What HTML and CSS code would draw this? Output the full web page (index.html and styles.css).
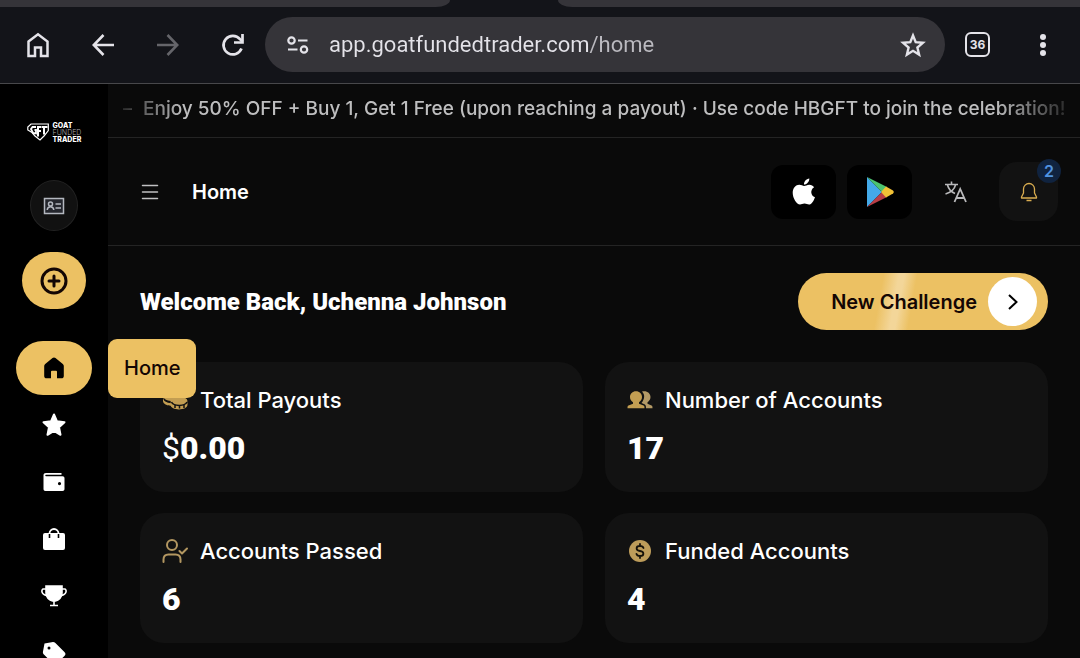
FILE: index.html
```html
<!DOCTYPE html>
<html lang="en">
<head>
    <meta charset="UTF-8">
    <meta name="viewport" content="width=device-width, initial-scale=1.0">
    <title>Home | Goat Funded Trader</title>
    <link rel="stylesheet" href="styles.css">
</head>
<body>
    <!-- browser bar -->
    <div class="browser">
        <div class="tabs">
            <div class="tab tabLeft"></div>
            <div class="tab tabRight"></div>
        </div>
        <div class="toolbar">
            <button class="toolButton" aria-label="Home page">
                <svg width="24" height="26" viewBox="0 0 24 26" fill="none" stroke="currentColor" stroke-width="2.500"><path d="M2.500 9.500 12 2.300l9.500 7.200V24H15v-8.500H9V24H2.500z"/></svg>
            </button>
            <button class="toolButton" aria-label="Back">
                <svg width="22" height="22" viewBox="0 0 22 22" fill="none" stroke="currentColor" stroke-width="2.600"><path d="M22 11H2M11.500 1 1.800 11l9.700 10"/></svg>
            </button>
            <button class="toolButton disabled" aria-label="Forward" disabled>
                <svg width="22" height="22" viewBox="0 0 22 22" fill="none" stroke="currentColor" stroke-width="2.600"><path d="M0 11h20M10.500 1l9.700 10-9.700 10"/></svg>
            </button>
            <button class="toolButton" aria-label="Reload">
                <svg width="24" height="24" viewBox="0 0 24 24" fill="none" stroke="currentColor" stroke-width="2.700"><path d="M20.500 15.500A9.300 9.300 0 1 1 19 6.200l2.500 2.500"/><path d="M21.500 1v8.500H13"/></svg>
            </button>
            <div class="addressBar">
                <svg width="22" height="18" viewBox="0 0 22 18" fill="none" stroke="currentColor" stroke-width="2.200"><circle cx="4.500" cy="4.500" r="3.200"/><path d="M11 4.500h9.500M1 13.500h9.500"/><circle cx="17" cy="13.500" r="3.200"/></svg>
                <input class="url" type="text" aria-label="Address" value="app.goatfundedtrader.com/home">
                <button class="bookmark" aria-label="Bookmark">
                    <svg width="26" height="26" viewBox="0 0 26 26" fill="none" stroke="currentColor" stroke-width="2.400"><path d="m13 3.500 2.700 6.700 7.200.6-5.500 4.700 1.700 7.100L13 18.800l-6.100 3.800 1.700-7.100-5.500-4.700 7.200-.6z"/></svg>
                </button>
            </div>
            <button class="toolButton" aria-label="Open tabs"><span class="tabCount">36</span></button>
            <button class="toolButton" aria-label="Menu">
                <svg width="6" height="22" viewBox="0 0 6 22" fill="currentColor"><circle cx="3" cy="3" r="3"/><circle cx="3" cy="11" r="3"/><circle cx="3" cy="19" r="3"/></svg>
            </button>
        </div>
    </div>

    <div class="app">
        <aside class="sidebar">
            <a class="logo" href="#">
                <svg width="22" height="18" viewBox="0 0 22 18" fill="none" stroke="#fff" stroke-width="1.200"><path d="M4 1h17.300v6.500L17 13l-4 4-5-4-3-3.500L.800 7V4z"/><path d="M9 4H5.500L4 6l2 4 3 .5V7H7.500" stroke-width="1.800"/><path d="M14.500 4H11v9.500M11 8h3" stroke-width="2"/><path d="M15 4h5.500M17 4v7.500" stroke-width="2"/></svg>
                <span class="logoText"><b>GOAT</b><span>FUNDED</span><b>TRADER</b></span>
            </a>
            <button class="profile" aria-label="Profile">
                <svg width="22" height="18" viewBox="0 0 22 18" fill="#24262d" stroke="#b4b8c0" stroke-width="1.500"><path d="M1.500 1.500h19v15h-19z"/><circle cx="7.500" cy="7" r="2" fill="none"/><path d="M4.200 13c.4-4.500 6.200-4.500 6.600 0M12.500 7H18M12.500 11H18" fill="none"/></svg>
            </button>
            <button class="addButton" aria-label="Add">
                <svg width="28" height="28" viewBox="0 0 28 28" fill="none" stroke="currentColor" stroke-width="3" stroke-linecap="round"><circle cx="14" cy="14" r="12"/><path d="M14 9v10M9 14h10"/></svg>
            </button>
            <nav class="menu">
                <a class="menuItem active" href="#" aria-label="Home">
                    <svg width="22" height="22" viewBox="0 0 22 22" fill="currentColor"><path d="M11 .5c.6 0 1 .2 1.500.6l7.300 6c.7.6 1 1.200 1 2V19c0 1.400-.9 2.300-2.300 2.300H14v-6.500a1 1 0 0 0-1-1H9a1 1 0 0 0-1 1v6.500H3.500C2.100 21.300 1.200 20.400 1.200 19V9.100c0-.8.3-1.400 1-2l7.300-6c.5-.4.900-.6 1.500-.6z"/></svg>
                    <span class="tooltip">Home</span>
                </a>
                <a class="menuItem" href="#" aria-label="Favourites">
                    <svg width="26" height="26" viewBox="0 0 26 26" fill="currentColor" stroke="currentColor" stroke-width="2" stroke-linejoin="round"><path d="m13 2.500 3 6.800 7.500.9-5.500 5.100 1.500 7.500L13 19l-6.500 3.800L8 15.300l-5.500-5.100 7.500-.9z"/></svg>
                </a>
                <a class="menuItem" href="#" aria-label="Wallet">
                    <svg width="22" height="20" viewBox="0 0 22 20" fill="currentColor"><path d="M3 1h15.500v1.800H3a.7.7 0 0 0 0 1.500h16.500c1.300 0 2 .7 2 2V17c0 1.300-.7 2-2 2H2.500c-1.300 0-2-.7-2-2V3.200C.5 1.800 1.500 1 3 1zm13.500 9a1.600 1.600 0 1 0 0 3.200 1.600 1.600 0 0 0 0-3.200z"/></svg>
                </a>
                <a class="menuItem" href="#" aria-label="Shop">
                    <svg width="24" height="22" viewBox="0 0 24 22"><path d="M7.500 8V5.500a4.500 4.500 0 0 1 9 0V8" fill="none" stroke="#fff" stroke-width="1.800"/><rect x="1" y="5" width="22" height="17" rx="2" fill="#fff"/><path d="M7.500 6v4M16.500 6v4" stroke="#000" stroke-width="1.600"/></svg>
                </a>
                <a class="menuItem" href="#" aria-label="Competitions">
                    <svg width="26" height="22" viewBox="0 0 26 22" fill="none" stroke="currentColor" stroke-width="1.600"><path d="M5 1h16v7c0 4.500-3.500 7.500-6.500 8h-3C8.500 15.500 5 12.500 5 8z" fill="currentColor"/><path d="M5.500 4H2.300C.3 4-.5 10 6.500 10.500M20.500 4h3.200c2 0 2.800 6-4.200 6.500M13 16v4M9 20.500h8"/></svg>
                </a>
                <a class="menuItem" href="#" aria-label="Offers">
                    <svg width="26" height="26" viewBox="0 0 26 26"><path d="M3.500 3.500 12 2c1 0 1.700.3 2.400 1l9 9c1.400 1.300 1.400 2.700 0 4l-7.500 7.500c-1.300 1.300-2.700 1.300-4 0l-9-9c-.8-.8-1-1.500-1-2.500z" fill="#fff"/><circle cx="8" cy="8" r="1.500" fill="#000"/></svg>
                </a>
            </nav>
        </aside>

        <main class="main">
            <div class="promo">
                <p><span class="promoDash">–</span>Enjoy 50% OFF + Buy 1, Get 1 Free (upon reaching a payout) · Use code HBGFT to join the celebration!</p>
            </div>
            <header class="header">
                <button class="menuToggle" aria-label="Toggle menu">
                    <svg width="18" height="16" viewBox="0 0 18 16" stroke="currentColor" stroke-width="1.500" stroke-linecap="round"><path d="M1.500 1.500h15M1.500 8h15M1.500 14.500h15"/></svg>
                </button>
                <h2 class="pageName">Home</h2>
                <div class="actions">
                    <a class="store" href="#" aria-label="App Store">
                        <svg width="24" height="28" viewBox="0 0 24 28" fill="#fff"><path d="M17.300.500c.2 2.800-2.400 6.100-5.300 6.100-.4-2.800 2.400-5.900 5.300-6.100z"/><path d="M12.100 8c1.400 0 2.900-1.300 5.300-1.300 1.900 0 3.700 1 4.700 2.500-4.200 2.600-3.500 8.400.9 10-1.300 3.600-3.500 7.300-6 7.300-1.700 0-2.400-1-4.500-1s-2.900 1-4.500 1C4.700 26.500.7 20.300.7 14.800c0-5 3.200-8 6.500-8 2.100 0 3.700 1.200 4.900 1.200z"/></svg>
                    </a>
                    <a class="store" href="#" aria-label="Google Play">
                        <svg width="28" height="32" viewBox="0 0 28 32"><path d="M1 1v30l15-15z" fill="#44a9e8"/><path d="M1 1l20 10-5 5z" fill="#4cc470"/><path d="M1 31l20-10-5-5z" fill="#b93d46"/><path d="M20 10.500l7 4q1.500 1.500 0 3l-7 4-5-5.500z" fill="#f2c136"/></svg>
                    </a>
                    <button class="language" aria-label="Language">
                        <svg width="24" height="22" viewBox="0 0 24 22" fill="none" stroke="#b9b9bb" stroke-width="1.600"><path d="M1 3.500h13M7.500.5v3M3.500 4c1 4 4 7 7.500 8.500M11.500 4C10.500 8 6.500 11.500 1.500 13"/><path d="M10.500 21l5.700-13 5.800 13M12.500 17h7.500" stroke-width="1.800"/></svg>
                    </button>
                    <button class="bell" aria-label="Notifications">
                        <svg width="18" height="20" viewBox="0 0 18 20" fill="none" stroke="#d9ad50" stroke-width="1.300" stroke-linejoin="round"><path d="M3.500 11V7a5.500 5.500 0 0 1 11 0v4l2 4v1h-15v-1zM6.500 18.500h5"/></svg>
                        <span class="badge">2</span>
                    </button>
                </div>
            </header>

            <section class="content">
                <div class="welcome">
                    <h1>Welcome Back, Uchenna Johnson</h1>
                    <a class="challenge" href="#">
                        <span>New Challenge</span>
                        <span class="arrow">
                            <svg width="12" height="18" viewBox="0 0 12 18" fill="none" stroke="currentColor" stroke-width="2"><path d="M2 2l7.500 7L2 16"/></svg>
                        </span>
                    </a>
                </div>
                <div class="cards">
                    <div class="card">
                        <h3>
                            <svg width="26" height="26" viewBox="0 0 26 26" fill="#c39e52"><ellipse cx="9" cy="9" rx="8" ry="5"/><path d="M1 11v3c0 5 11 6 12 3-6-1-10-2-12-6z"/><ellipse cx="17" cy="14" rx="8.500" ry="4.500"/><path d="M8.500 15v2.500c0 6.500 17 6.500 17 0V15c-2 4-15 4-17 0z"/><path d="M9.500 15c2 4.500 13.500 4.500 15.500 0M13 18v3M17.500 18.500v3M22 18v3M2 12c1 2 3 3 6 3" fill="none" stroke="#121212" stroke-width="1.500"/></svg>
                            Total Payouts
                        </h3>
                        <p class="value"><span>$</span>0.00</p>
                    </div>
                    <div class="card">
                        <h3>
                            <svg width="26" height="26" viewBox="0 0 26 26" fill="#c39e52"><path d="M9 4.200c3.500 0 6 2.500 6 5.800 0 2.300-1.200 4.200-3 5.200v1.500l4.500 1.800c.8.400 1 .8 1 2.700H.5c0-1.900.2-2.300 1-2.700L6 16.700v-1.500c-1.800-1-3-2.900-3-5.200 0-3.300 2.500-5.800 6-5.800z"/><path d="M15 4.600c4-1.500 8.500 1 8.500 5.400 0 2.300-1.300 4.200-3 5.200v1.500l4 1.800c.8.400 1 .8 1 2.700H19c0-2.500-.4-3.300-1.600-3.900L14.500 16c3.500-4 3.500-8.500.5-11.400z" fill="#b49a66"/></svg>
                            Number of Accounts
                        </h3>
                        <p class="value">17</p>
                    </div>
                    <div class="card">
                        <h3>
                            <svg width="26" height="26" viewBox="0 0 26 26" fill="none" stroke="#b39761" stroke-width="2" stroke-linecap="round" stroke-linejoin="round"><circle cx="10" cy="7" r="5"/><path d="M1.500 24v-2.500c0-3 2-5 5-5h7c3 0 5 2 5 5V24M17.500 13l2.500 2.500L25 10.500"/></svg>
                            Accounts Passed
                        </h3>
                        <p class="value">6</p>
                    </div>
                    <div class="card">
                        <h3>
                            <svg width="26" height="26" viewBox="0 0 26 26"><circle cx="13" cy="13" r="11" fill="#bd9c5a"/><path d="M16.500 10c-.4-1.200-1.700-2-3.500-2-4.500 0-4.500 4.500 0 5s4.500 5 0 5c-1.900 0-3.200-.8-3.600-2.200M13 6v2M13 18v2" fill="none" stroke="#16120a" stroke-width="1.800" stroke-linecap="round"/></svg>
                            Funded Accounts
                        </h3>
                        <p class="value">4</p>
                    </div>
                </div>
            </section>
        </main>
    </div>
</body>
</html>
```
FILE: styles.css
```css
:root{
    --gold: #ecc163;
    --line: #242424;
    --bar: #131419;
    --barLight: #353439;
}
*{
    box-sizing: border-box;
}
body{
    margin: 0px;
    height: 100vh;
    display: flex;
    flex-direction: column;
    overflow: hidden;
    background-color: #0a0a0a;
    color: white;
    font-family: Inter, sans-serif;
}
h1, h2, h3, p{
    margin: 0px;
}
a{
    color: inherit;
    text-decoration: none;
}
button{
    border: none;
    padding: 0px;
    background: none;
    color: inherit;
    font-family: inherit;
    display: flex;
    align-items: center;
    justify-content: center;
}
svg{
    flex-shrink: 0;
}

/* browser bar */
.browser{
    flex-shrink: 0;
    background-color: var(--bar);
    border-bottom: 1px solid #48484b;
    color: #e4e3e9;
}
.tabs{
    display: flex;
    justify-content: space-between;
    gap: 108px;
    height: 7px;
}
.tab{
    background-color: var(--barLight);
}
.tabLeft{
    flex: 450;
    border-bottom-right-radius: 14px 7px;
}
.tabRight{
    flex: 522;
    border-bottom-left-radius: 14px 7px;
}
.toolbar{
    display: flex;
    align-items: center;
    padding: 10px 5px 11px;
}
.toolButton{
    width: 65px;
    height: 55px;
    flex-shrink: 0;
}
.disabled{
    color: #65656a;
}
.addressBar{
    flex: 1;
    min-width: 0px;
    height: 55px;
    padding: 0px 19px 0px 22px;
    display: flex;
    align-items: center;
    gap: 20px;
    border-radius: 28px;
    background-color: var(--barLight);
}
.url{
    flex: 1;
    min-width: 0px;
    border: none;
    outline: none;
    padding: 0px;
    /* dims the path after the host name */
    background: linear-gradient(90deg, #e4e3e9 260px, #bbbac0 260px);
    background-clip: text;
    color: transparent;
    font-family: Roboto, sans-serif;
    font-size: 22px;
    line-height: 32px;
}
.tabCount{
    width: 25px;
    height: 25px;
    border: 2px solid #e4e3e9;
    border-radius: 6px;
    font-size: 12px;
    font-weight: 700;
    line-height: 21px;
}

.app{
    flex: 1;
    min-height: 0px;
    display: flex;
}

/* sidebar */
.sidebar{
    width: 108px;
    flex-shrink: 0;
    padding-top: 36px;
    display: flex;
    flex-direction: column;
    align-items: center;
    background-color: black;
}
.sidebar > *{
    flex-shrink: 0;
}
.logo{
    display: flex;
    align-items: center;
    gap: 4px;
    height: 24px;
}
.logoText{
    display: flex;
    flex-direction: column;
    font-size: 7px;
    line-height: 7px;
}
.logoText b{
    font-weight: 800;
}
.logoText span{
    color: #aaaaaa;
    font-weight: 300;
}
.profile{
    width: 48px;
    height: 51px;
    margin-top: 36px;
    border: 1px solid #222222;
    border-radius: 50%;
    background-color: #111111;
}
.addButton{
    width: 64px;
    height: 57px;
    margin-top: 21px;
    border-radius: 29px;
    background-color: var(--gold);
    color: #130604;
}
.menu{
    margin-top: 32px;
    display: flex;
    flex-direction: column;
    gap: 3px;
}
.menuItem{
    position: relative;
    width: 76px;
    height: 54px;
    display: flex;
    align-items: center;
    justify-content: center;
    border-radius: 27px;
}
.active{
    background-color: var(--gold);
    color: black;
}
.tooltip{
    position: absolute;
    left: 92px;
    top: -2px;
    z-index: 2;
    padding: 0px 16px;
    border-radius: 9px;
    background-color: var(--gold);
    color: #130604;
    font-size: 20px;
    font-weight: 500;
    line-height: 59px;
}

/* main column */
.main{
    flex: 1;
    min-width: 0px;
}
.promo{
    height: 54px;
    display: flex;
    justify-content: center;
    padding-top: 10px;
    border-bottom: 1px solid var(--line);
    overflow: hidden;
    white-space: nowrap;
    color: #bebebf;
    font-size: 19px;
    font-weight: 500;
    line-height: 30px;
}
.promo p{
    mask-image: linear-gradient(90deg, rgba(0, 0, 0, 0.2), black 60px, black calc(100% - 70px), rgba(0, 0, 0, 0.2));
}
.promoDash{
    margin-right: 11px;
}
.header{
    height: 108px;
    padding: 0px 22px 0px 33px;
    display: flex;
    align-items: center;
    border-bottom: 1px solid var(--line);
}
.menuToggle{
    color: #c0c0c1;
}
.pageName{
    margin-left: 33px;
    font-size: 20px;
    font-weight: 600;
}
.actions{
    margin-left: auto;
    display: flex;
    align-items: center;
    gap: 11px;
}
.store{
    width: 65px;
    height: 54px;
    display: flex;
    align-items: center;
    justify-content: center;
    border-radius: 12px;
    background-color: black;
}
.language{
    width: 65px;
    height: 54px;
}
.bell{
    position: relative;
    width: 59px;
    height: 59px;
    border-radius: 18px;
    background-color: #121212;
}
.badge{
    position: absolute;
    top: -3px;
    right: -3px;
    width: 24px;
    height: 24px;
    border-radius: 12px;
    background-color: #10233f;
    color: #5193e0;
    font-size: 16px;
    font-weight: 600;
    line-height: 24px;
}

.content{
    padding: 27px 32px;
}
.welcome{
    display: flex;
    align-items: center;
    justify-content: space-between;
}
.welcome h1{
    font-family: Roboto, sans-serif;
    font-size: 24px;
    font-weight: 900;
    line-height: 32px;
}
.challenge{
    height: 57px;
    padding: 0px 11px 0px 33px;
    display: flex;
    align-items: center;
    gap: 11px;
    border-radius: 29px;
    background: linear-gradient(100deg, transparent 33%, #f3d699 39%, #f3d699 41%, transparent 46%), var(--gold);
    color: #130604;
    font-size: 20px;
    font-weight: 600;
}
.arrow{
    width: 49px;
    height: 49px;
    display: flex;
    align-items: center;
    justify-content: center;
    border-radius: 50%;
    background-color: white;
    color: black;
}
.cards{
    margin-top: 32px;
    display: grid;
    grid-template-columns: 1fr 1fr;
    gap: 21px 22px;
}
.card{
    min-height: 130px;
    padding: 22px;
    border-radius: 24px;
    background-color: #121212;
}
.card h3{
    display: flex;
    align-items: center;
    gap: 12px;
    font-size: 22px;
    font-weight: 500;
    line-height: 32px;
}
.value{
    margin-top: 12px;
    font-family: Roboto, sans-serif;
    font-size: 32px;
    font-weight: 900;
    line-height: 40px;
}
.value span{
    font-weight: 400;
}
```
